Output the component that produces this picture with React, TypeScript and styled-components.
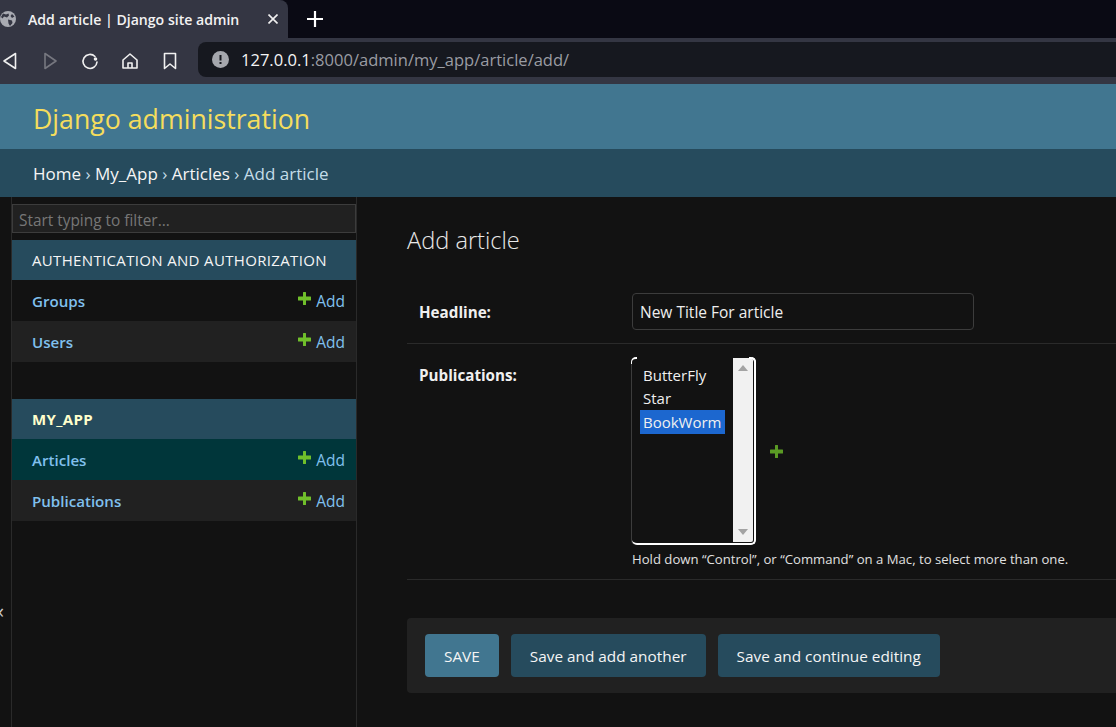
import React from "react";
import styled, { createGlobalStyle } from "styled-components";

const GlobalStyle = createGlobalStyle`
  html, body {
    margin: 0;
    padding: 0;
    background: #121212;
    overflow: hidden;
  }
  * { box-sizing: border-box; }
`;

const FONT = `"Open Sans", "Noto Sans", "Liberation Sans", sans-serif`;

const Page = styled.div`
  width: 1116px;
  height: 727px;
  display: flex;
  flex-direction: column;
  overflow: hidden;
  position: relative;
  font-family: ${FONT};
  background: #121212;
  color: #eeeeee;
`;

const TabStrip = styled.div`
  height: 38px;
  display: flex;
  align-items: center;
  background: #0a0a14;
`;

const Tab = styled.div`
  width: 288px;
  height: 38px;
  flex-shrink: 0;
  display: flex;
  align-items: center;
  background: #343643;
  border-top-right-radius: 8px;
  color: #f2f2f2;
  font-size: 14.1px;
  font-weight: 600;
  svg { flex-shrink: 0; }
`;

const TabTitle = styled.span`
  margin-left: 12px;
  width: 240px;
  white-space: nowrap;
`;

const NewTab = styled.div`
  margin-left: 19px;
  display: flex;
`;

const Toolbar = styled.div`
  height: 46px;
  display: flex;
  align-items: center;
  background: #343643;
  padding-left: 0;
`;

const ToolIcon = styled.div`
  width: 40px;
  flex-shrink: 0;
  display: flex;
  justify-content: center;
  &:first-child { width: 20px; margin-right: 10px; }
`;

const UrlBar = styled.div`
  margin-left: 8px;
  margin-top: -3px;
  flex: 1;
  height: 35px;
  background: #16181f;
  border-radius: 8px 0 0 8px;
  display: flex;
  align-items: center;
  padding-left: 14px;
  font-size: 16.55px;
  color: #9a9ca3;
`;

const UrlHost = styled.span`
  color: #f4f4f4;
  margin-left: 12px;
`;

const Branding = styled.div`
  height: 65px;
  background: #417690;
  display: flex;
  align-items: center;
  padding: 3px 0 0 33px;
  font-size: 26.7px;
  color: #f5dd5d;
`;

const Crumbs = styled.div`
  height: 48px;
  background: #264b5d;
  display: flex;
  align-items: center;
  padding-left: 33px;
  font-size: 17px;
  color: #c4dce8;
  white-space: pre;
`;

const CrumbLink = styled.span`
  color: #f5f5f5;
`;

const Body = styled.div`
  flex: 1;
  display: flex;
`;

const Sidebar = styled.div`
  flex-shrink: 0;
  margin-left: 11px;
  padding-top: 7px;
  border-left: 1px solid #2a2a2a;
  border-right: 1px solid #2a2a2a;
  width: 346px;
`;

const Filter = styled.div`
  height: 29px;
  background: #212121;
  border: 1px solid #3c3c3c;
  padding: 4px 0 0 6px;
  display: flex;
  align-items: center;
  font-size: 15.4px;
  color: #777777;
`;

const AppModule = styled.div`
  margin-top: 7px;
  & + & { margin-top: 37px; }
`;

const ModuleTitle = styled.div<{ $current?: boolean }>`
  height: 40px;
  background: #264b5d;
  display: flex;
  align-items: center;
  padding-left: 20px;
  font-size: 15px;
  letter-spacing: 0.34px;
  font-weight: ${(p) => (p.$current ? 700 : 400)};
  color: ${(p) => (p.$current ? "#ffffcc" : "#f5f5f5")};
`;

const ModelRow = styled.div<{ $bg: string }>`
  height: 41px;
  background: ${(p) => p.$bg};
  display: flex;
  align-items: center;
  justify-content: space-between;
  padding: 1px 11px 0 20px;
`;

const ModelName = styled.span`
  font-size: 15.1px;
  font-weight: 600;
  color: #80c0ee;
`;

const AddLink = styled.span`
  display: flex;
  align-items: center;
  gap: 5px;
  color: #80c0ee;
  font-size: 15.5px;
  svg { margin-top: -6px; }
`;

const Main = styled.div`
  flex: 1;
  min-width: 0;
  padding: 0 0 0 50px;
`;

const Title = styled.h1`
  margin: 26px 0 0;
  height: 34px;
  font-size: 23.6px;
  line-height: 34px;
  font-weight: 300;
  color: #e8e8e8;
`;

const HeadlineRow = styled.div`
  margin-top: 18px;
  width: 900px;
  height: 69px;
  padding-top: 27px;
  display: flex;
  border-bottom: 1px solid #2a2a2a;
`;

const PublicationsRow = styled.div`
  width: 900px;
  height: 236px;
  padding-top: 13px;
  display: flex;
  border-bottom: 1px solid #2a2a2a;
`;

const FieldLabel = styled.label<{ $offset?: number }>`
  width: 225px;
  flex-shrink: 0;
  padding: ${(p) => p.$offset ?? 0}px 0 0 12px;
  font-size: 15.2px;
  font-weight: 700;
  line-height: 20px;
  color: #f0f0f0;
`;

const TextInput = styled.div`
  margin-top: -9px;
  width: 342px;
  height: 37px;
  border: 1px solid #3c3c3c;
  border-radius: 4px;
  display: flex;
  align-items: center;
  padding-left: 7px;
  font-size: 15.5px;
  color: #eeeeee;
`;

const FieldBody = styled.div`
  display: flex;
  flex-direction: column;
`;

const SelectLine = styled.div`
  display: flex;
  align-items: center;
  gap: 14px;
`;

const ListBox = styled.div`
  width: 124px;
  height: 188px;
  border-radius: 5px;
  border-style: solid;
  border-color: #ffffff;
  border-width: 0 2px 2px 0;
  box-shadow: -1px 0 0 0 #3c3c3c;
  display: flex;
  position: relative;
  padding: 1px 1px 1px 0;
  background: #121212;

  &::before,
  &::after {
    content: "";
    position: absolute;
    top: 0;
    width: 5px;
    height: 5px;
    border-top: 2px solid #ffffff;
  }
  &::before {
    left: -1px;
    border-left: 1px solid #ffffff;
    border-top-left-radius: 5px;
  }
  &::after {
    right: -2px;
    border-right: 2px solid #ffffff;
    border-top-right-radius: 5px;
  }
`;

const Options = styled.div`
  flex: 1;
  padding: 5px 8px 0 8px;
  display: flex;
  flex-direction: column;
`;

const Option = styled.div<{ $selected?: boolean }>`
  height: 23.5px;
  display: flex;
  align-items: center;
  padding-left: 3px;
  font-size: 15px;
  background: ${(p) => (p.$selected ? "#1c67cf" : "transparent")};
  color: #f0f0f0;
`;

const Scrollbar = styled.div`
  width: 20px;
  background: #f1f1f1;
  display: flex;
  flex-direction: column;
  justify-content: space-between;
  align-items: center;
  padding: 7px 0;
  border-radius: 0 2px 2px 0;
`;

const Help = styled.div`
  margin-top: 5px;
  font-size: 13.15px;
  color: #e0e0e0;
  white-space: nowrap;
`;

const SubmitRow = styled.div`
  margin-top: 38px;
  width: 900px;
  height: 75px;
  background: #212121;
  border-radius: 4px;
  padding: 16px 18px;
  display: flex;
  gap: 12px;
`;

const Button = styled.div<{ $primary?: boolean }>`
  height: 43px;
  padding: 0 19px;
  background: ${(p) => (p.$primary ? "#417690" : "#264b5d")};
  border-radius: 4px;
  display: flex;
  align-items: center;
  font-size: 15.35px;
  color: #f5f5f5;
  white-space: nowrap;
`;

const SidebarToggle = styled.div`
  position: absolute;
  left: -6px;
  top: 597px;
  font-size: 20px;
  color: #cccccc;
`;

const Plus = ({ color = "#70bf2b" }: { color?: string }) => (
  <svg width="13" height="13" viewBox="0 0 13 13">
    <path
      d="M5 0.500Q5 0 5.500 0h2Q8 0 8 0.500V4.500H12.500Q13 4.500 13 5v3Q13 8.500 12.500 8.500H8v4Q8 13 7.500 13h-2Q5 13 5 12.500v-4H0.500Q0 8.500 0 8V5Q0 4.500 0.500 4.500H5z"
      fill={color}
    />
  </svg>
);

const Globe = () => (
  <svg width="16" height="16" viewBox="0 0 16 16">
    <circle cx="8" cy="8" r="8" fill="#a9abb2" />
    <path
      d="M3 2.500l3 1 2.500-1 .5 2-2 2-3-1-1.500 2L1 6zM8 8.500l4 1 .5 2.500-2.500 3-1.500-2.500zM12 3l2.500 2.500L12 7l-1.500-2z"
      fill="#343643"
    />
  </svg>
);

const Stroke = ({ children, opacity = 1 }: { children: React.ReactNode; opacity?: number }) => (
  <svg
    width="20"
    height="20"
    viewBox="0 0 20 20"
    fill="none"
    stroke="#f0f0f0"
    strokeWidth="1.6"
    strokeLinejoin="round"
    strokeLinecap="round"
    opacity={opacity}
  >
    {children}
  </svg>
);

export default function App() {
  return (
    <Page>
      <GlobalStyle />
      <TabStrip>
        <Tab>
          <Globe />
          <TabTitle>Add article | Django site admin</TabTitle>
          <svg width="10" height="10" viewBox="0 0 10 10" stroke="#f0f0f0" strokeWidth="1.6">
            <path d="M.5.5l9 9M9.500.5l-9 9" />
          </svg>
        </Tab>
        <NewTab>
          <svg width="16" height="16" viewBox="0 0 16 16" stroke="#ffffff" strokeWidth="2.2">
            <path d="M8 0v16M0 8h16" />
          </svg>
        </NewTab>
      </TabStrip>
      <Toolbar>
        <ToolIcon>
          <Stroke><path d="M15.500 2.500v15L4 10z" /></Stroke>
        </ToolIcon>
        <ToolIcon>
          <Stroke opacity={0.35}><path d="M5 2.500v15L16 10z" /></Stroke>
        </ToolIcon>
        <ToolIcon>
          <Stroke>
            <path d="M15 5.500A7 7 0 1 0 17 11" />
            <circle cx="15.500" cy="8" r="1" fill="#f0f0f0" />
          </Stroke>
        </ToolIcon>
        <ToolIcon>
          <Stroke>
            <path d="M3 9L10 3l7 6V17H3zM8 17v-5h4v5" />
          </Stroke>
        </ToolIcon>
        <ToolIcon>
          <Stroke><path d="M4.500 2.500h11v15L10 13l-5.500 4.500z" /></Stroke>
        </ToolIcon>
        <UrlBar>
          <svg width="17" height="17" viewBox="0 0 17 17">
            <circle cx="8.500" cy="8.500" r="8.500" fill="#a5a7ad" />
            <path d="M7.500 4h2v5.500h-2zM7.500 11h2v2h-2z" fill="#16181f" />
          </svg>
          <UrlHost>127.0.0.1</UrlHost>:8000/admin/my_app/article/add/
        </UrlBar>
      </Toolbar>
      <Branding>Django administration</Branding>
      <Crumbs>
        <CrumbLink>Home</CrumbLink> › <CrumbLink>My_App</CrumbLink> › <CrumbLink>Articles</CrumbLink> › Add article
      </Crumbs>
      <Body>
        <Sidebar>
          <Filter>Start typing to filter...</Filter>
          <AppModule>
            <ModuleTitle>AUTHENTICATION AND AUTHORIZATION</ModuleTitle>
            <ModelRow $bg="#121212">
              <ModelName>Groups</ModelName>
              <AddLink><Plus />Add</AddLink>
            </ModelRow>
            <ModelRow $bg="#212121">
              <ModelName>Users</ModelName>
              <AddLink><Plus />Add</AddLink>
            </ModelRow>
          </AppModule>
          <AppModule>
            <ModuleTitle $current>MY_APP</ModuleTitle>
            <ModelRow $bg="#00363a">
              <ModelName>Articles</ModelName>
              <AddLink><Plus />Add</AddLink>
            </ModelRow>
            <ModelRow $bg="#212121">
              <ModelName>Publications</ModelName>
              <AddLink><Plus />Add</AddLink>
            </ModelRow>
          </AppModule>
        </Sidebar>
        <Main>
          <Title>Add article</Title>
          <HeadlineRow>
            <FieldLabel>Headline:</FieldLabel>
            <TextInput>New Title For article</TextInput>
          </HeadlineRow>
          <PublicationsRow>
            <FieldLabel $offset={8}>Publications:</FieldLabel>
            <FieldBody>
              <SelectLine>
                <ListBox>
                  <Options>
                    <Option>ButterFly</Option>
                    <Option>Star</Option>
                    <Option $selected>BookWorm</Option>
                  </Options>
                  <Scrollbar>
                    <svg width="10" height="6" viewBox="0 0 10 6"><path d="M5 0l5 6H0z" fill="#a3a3a3" /></svg>
                    <svg width="10" height="6" viewBox="0 0 10 6"><path d="M0 0h10L5 6z" fill="#a3a3a3" /></svg>
                  </Scrollbar>
                </ListBox>
                <Plus color="#5a9a24" />
              </SelectLine>
              <Help>Hold down “Control”, or “Command” on a Mac, to select more than one.</Help>
            </FieldBody>
          </PublicationsRow>
          <SubmitRow>
            <Button $primary>SAVE</Button>
            <Button>Save and add another</Button>
            <Button>Save and continue editing</Button>
          </SubmitRow>
        </Main>
      </Body>
      <SidebarToggle>«</SidebarToggle>
    </Page>
  );
}
